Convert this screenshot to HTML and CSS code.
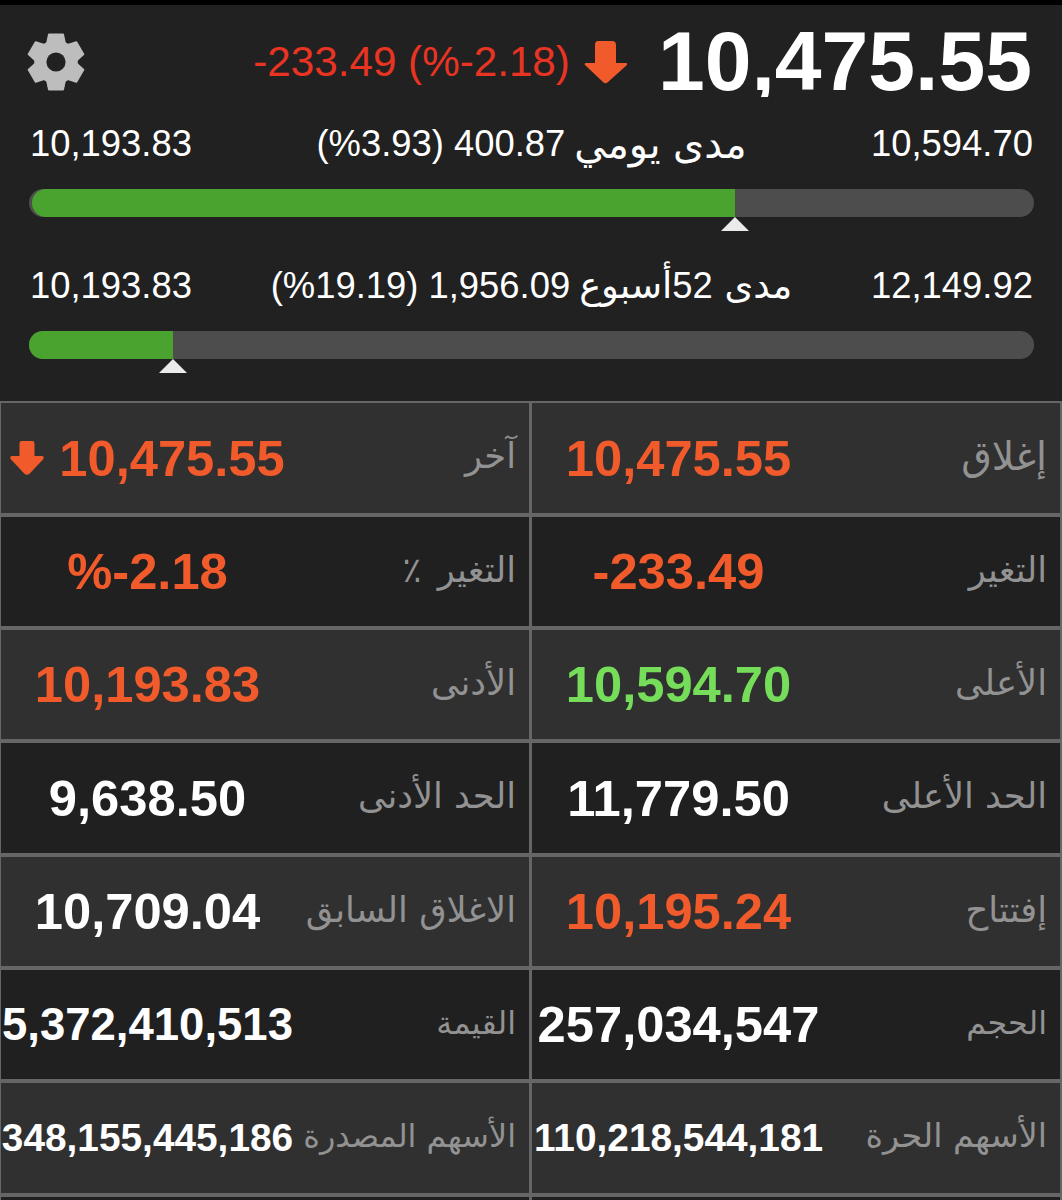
FILE: index.html
```
<!DOCTYPE html>
<html lang="ar">

<head>
    <meta charset="UTF-8">
    <meta name="viewport" content="width=device-width, initial-scale=1.0">
    <title>ملخص السوق</title>
    <link rel="stylesheet" href="styles.css">
</head>

<body>
    <!-- Index summary -->
    <header class="summary">
        <div class="top">
            <svg class="gear" viewBox="-30 -30 60 60">
                <circle r="21.8" />
                <g class="teeth">
                    <path id="tooth" d="M-7-27.5H7L9-18V18L7 27.5H-7L-9 18V-18Z" />
                    <use href="#tooth" transform="rotate(60)" />
                    <use href="#tooth" transform="rotate(120)" />
                </g>
                <circle class="hole" r="9.6" />
            </svg>
            <span class="change">-233.49 (%-2.18)</span>
            <svg class="arrow" viewBox="0 0 43 43">
                <path d="M14 0h14q4 0 4 4v18h10q2 0 1 2L24 41q-2.500 2.500-5 0L1 24q-1-2 1-2h9V4q0-4 3-4Z" />
            </svg>
            <span class="last-price">10,475.55</span>
        </div>

        <!-- Daily range -->
        <div class="range">
            <div class="range-text">
                <span class="low">10,193.83</span>
                <span class="middle"><span>(%3.93) 400.87</span><span class="ar day" dir="rtl">مدى يومي</span></span>
                <span class="high">10,594.70</span>
            </div>
            <div class="bar inset">
                <div class="fill" style="width: 70.2%"><i class="marker"></i></div>
            </div>
        </div>

        <!-- 52 week range -->
        <div class="range">
            <div class="range-text">
                <span class="low">10,193.83</span>
                <span class="middle"><span>(%19.19) 1,956.09</span><span class="ar year" dir="rtl">مدى <span class="num">52</span>أسبوع</span></span>
                <span class="high">12,149.92</span>
            </div>
            <div class="bar">
                <div class="fill" style="width: 14.3%"><i class="marker"></i></div>
            </div>
        </div>
    </header>

    <!-- Details table -->
    <main class="details">
        <div class="cell">
            <span class="value down">
                <svg class="arrow small" viewBox="0 0 43 43">
                    <path d="M15 0h13q3 0 3 3v16h9q4 0 2 4L25 41q-3.500 3.500-7 0L1 23q-2-4 2-4h9V3q0-3 3-3Z" />
                </svg>10,475.55</span>
            <span class="label" dir="rtl">آخر</span>
        </div>
        <div class="cell">
            <span class="value down">10,475.55</span>
            <span class="label large" dir="rtl">إغلاق</span>
        </div>

        <div class="cell dark">
            <span class="value down">%-2.18</span>
            <span class="label" dir="rtl">التغير <b>٪</b></span>
        </div>
        <div class="cell dark">
            <span class="value down">-233.49</span>
            <span class="label" dir="rtl">التغير</span>
        </div>

        <div class="cell">
            <span class="value down">10,193.83</span>
            <span class="label" dir="rtl">الأدنى</span>
        </div>
        <div class="cell">
            <span class="value up">10,594.70</span>
            <span class="label" dir="rtl">الأعلى</span>
        </div>

        <div class="cell dark">
            <span class="value">9,638.50</span>
            <span class="label" dir="rtl">الحد الأدنى</span>
        </div>
        <div class="cell dark">
            <span class="value">11,779.50</span>
            <span class="label" dir="rtl">الحد الأعلى</span>
        </div>

        <div class="cell">
            <span class="value">10,709.04</span>
            <span class="label" dir="rtl">الاغلاق السابق</span>
        </div>
        <div class="cell">
            <span class="value down">10,195.24</span>
            <span class="label" dir="rtl">إفتتاح</span>
        </div>

        <div class="cell dark">
            <span class="value long">5,372,410,513</span>
            <span class="label small" dir="rtl">القيمة</span>
        </div>
        <div class="cell dark">
            <span class="value">257,034,547</span>
            <span class="label small" dir="rtl">الحجم</span>
        </div>

        <div class="cell">
            <span class="value longest">348,155,445,186</span>
            <span class="label small" dir="rtl">الأسهم المصدرة</span>
        </div>
        <div class="cell">
            <span class="value longest">110,218,544,181</span>
            <span class="label medium" dir="rtl">الأسهم الحرة</span>
        </div>

        <div class="cell dark"></div>
        <div class="cell dark"></div>
    </main>
</body>

</html>
```

FILE: styles.css
```
* {
    box-sizing: border-box;
}

body {
    margin: 0;
    background-color: #212121;
    color: #ffffff;
    font-family: "Liberation Sans", "DejaVu Sans", sans-serif;
}

.summary {
    height: 401px;
    padding: 0 28px 0 29px;
    border-top: 5px solid #000000;
}

.top {
    display: flex;
    align-items: center;
    height: 114px;
}

.gear {
    width: 60px;
    height: 60px;
    margin-left: -3px;
    fill: #bdbdbd;
}

.gear .teeth {
    stroke: #bdbdbd;
    stroke-width: 2;
    stroke-linejoin: round;
}

.gear .hole {
    fill: #212121;
}

.change {
    margin-left: auto;
    color: #ea3423;
    font-size: 42.2px;
}

.arrow {
    width: 43px;
    height: 43px;
    margin: 0 31px 0 14px;
    fill: #f15a2b;
}

/* the box is tight, so the comma tail is cut at its bottom edge */
.last-price {
    height: 70px;
    margin-right: 2px;
    overflow: hidden;
    font-size: 84.1px;
    font-weight: bold;
    line-height: 68px;
}

.range {
    height: 141.5px;
}

.range-text {
    display: flex;
    justify-content: space-between;
    height: 70px;
    padding: 0 1px;
    font-size: 36.4px;
    line-height: 50px;
}

.range-text .low,
.range-text .high {
    width: 162px;
    white-space: nowrap;
}

.middle {
    display: flex;
    gap: 9px;
    white-space: nowrap;
}

.ar {
    font-family: "DejaVu Sans", sans-serif;
}

.ar.day {
    font-size: 39.8px;
}

.ar.year {
    font-size: 36.8px;
}

.ar .num {
    font-family: "Liberation Sans", sans-serif;
    font-size: 36.4px;
}

.bar {
    height: 28px;
    border-radius: 14px;
    background-color: #4d4d4d;
}

.bar.inset {
    padding-left: 3px;
}

.fill {
    position: relative;
    height: 28px;
    border-radius: 14px 0 0 14px;
    background-color: #4aa32f;
}

.marker {
    position: absolute;
    top: 28px;
    right: -14px;
    border: 14px solid transparent;
    border-top: 0;
    border-bottom-color: #ebebeb;
}

.details {
    display: grid;
    grid-template-columns: 528px 528px;
    grid-template-rows: 110px 109px 109px 110px 109px 109px 110px 3px;
    gap: 4px 3px;
    padding: 2px 2px 0 1px;
    background-color: #666666;
}

.cell {
    display: flex;
    align-items: center;
    justify-content: space-between;
    padding-right: 13px;
    background-color: #303030;
}

.cell.dark {
    background-color: #202020;
}

.value {
    display: flex;
    align-items: center;
    justify-content: center;
    width: 293px;
    font-size: 50.7px;
    font-weight: bold;
    white-space: nowrap;
}

.value.long {
    font-size: 45.5px;
}

.value.longest {
    font-size: 38.8px;
}

.down {
    color: #f15a2b;
}

.up {
    color: #76dd5b;
}

.arrow.small {
    width: 34px;
    height: 34px;
    margin: 0 15px 0 0;
}

.label {
    padding-bottom: 5px;
    color: #929292;
    font-family: "DejaVu Sans", sans-serif;
    font-size: 35.3px;
    white-space: nowrap;
}

.label.large {
    font-size: 39.5px;
}

.label.medium {
    font-size: 33.4px;
}

.label.small {
    font-size: 31.8px;
}

.label b {
    margin-right: 5px;
    font-weight: normal;
}
```
